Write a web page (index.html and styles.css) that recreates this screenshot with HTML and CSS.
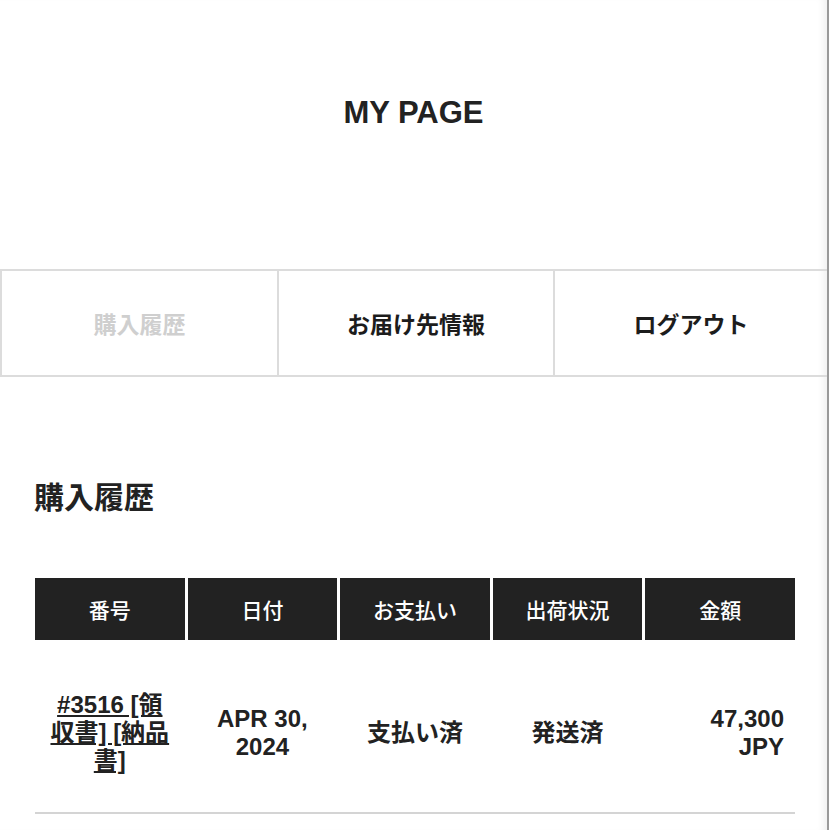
FILE: index.html
```html
<!DOCTYPE html>
<html lang="ja">
<head>
<meta charset="utf-8">
<title>MY PAGE</title>
<link rel="stylesheet" href="styles.css">
</head>
<body>
<div class="page">
  <h1 class="title">MY PAGE</h1>
  <nav class="tabs">
    <a class="tab tab-active">購入履歴</a>
    <a class="tab">お届け先情報</a>
    <a class="tab">ログアウト</a>
  </nav>
  <h2 class="section-title">購入履歴</h2>
  <div class="orders">
    <div class="orders-head">
      <div class="th">番号</div>
      <div class="th">日付</div>
      <div class="th">お支払い</div>
      <div class="th">出荷状況</div>
      <div class="th">金額</div>
    </div>
    <div class="orders-row">
      <div class="td td-num"><a class="order-link">#3516 [領収書] [納品書]</a></div>
      <div class="td">APR 30,<br>2024</div>
      <div class="td">支払い済</div>
      <div class="td">発送済</div>
      <div class="td td-amount">47,300<br>JPY</div>
    </div>
  </div>
</div>
</body>
</html>
```
FILE: styles.css
```css
html, body {
  margin: 0;
  padding: 0;
  background: #fff;
}
body {
  font-family: "Liberation Sans", "Noto Sans CJK JP", sans-serif;
  color: #222;
}
.page {
  width: 827px;
  min-height: 830px;
  border-right: 2px solid #9a9a9a;
  box-shadow: inset -8px 0 8px -6px rgba(0,0,0,0.08);
  overflow: hidden;
}
.title {
  margin: 93px 0 136px;
  font-size: 31px;
  line-height: 40px;
  font-weight: 700;
  text-align: center;
  color: #222;
}
.tabs {
  display: grid;
  grid-template-columns: 277px 276px 1fr;
  height: 104px;
  border-top: 2px solid #dcdcdc;
  border-bottom: 2px solid #dcdcdc;
}
.tab {
  display: flex;
  align-items: center;
  justify-content: center;
  border-left: 2px solid #dcdcdc;
  font-size: 23px;
  font-weight: 700;
  color: #1c1c1c;
}
.tab-active {
  color: #cfcfcf;
}
.section-title {
  margin: 101px 0 60px 34px;
  font-size: 30px;
  line-height: 40px;
  font-weight: 700;
  color: #222;
}
.orders {
  margin-left: 35px;
  width: 760px;
}
.orders-head,
.orders-row {
  display: grid;
  grid-template-columns: repeat(5, 1fr);
  column-gap: 3px;
}
.th {
  height: 62px;
  background: #222;
  color: #fff;
  display: flex;
  align-items: center;
  justify-content: center;
  font-size: 21px;
  font-weight: 500;
}
.orders-row {
  border-bottom: 2px solid #d4d4d4;
  padding: 51px 0 37px;
}
.td {
  display: flex;
  align-items: center;
  justify-content: center;
  text-align: center;
  font-size: 24px;
  line-height: 28px;
  font-weight: 700;
  color: #222;
}
.td-num {
  padding: 0 12px;
}
.order-link {
  text-decoration: underline;
  text-underline-offset: 2px;
  color: #222;
}
.td-amount {
  justify-content: flex-end;
  text-align: right;
  padding-right: 11px;
}
```
